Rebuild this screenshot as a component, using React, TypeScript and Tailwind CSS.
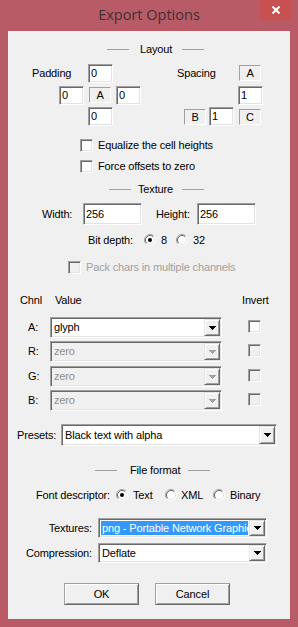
import React from "react";

const sunken =
  "border border-t-[#a0a0a0] border-l-[#a0a0a0] border-b-white border-r-white shadow-[inset_1px_1px_0_#696969,inset_-1px_-1px_0_#e3e3e3]";
const raised =
  "border border-t-[#e3e3e3] border-l-[#e3e3e3] border-b-[#696969] border-r-[#696969] shadow-[inset_1px_1px_0_#ffffff,inset_-1px_-1px_0_#a0a0a0]";
const btnRaised =
  "border border-t-[#a0a0a0] border-l-[#a0a0a0] border-b-[#696969] border-r-[#696969] shadow-[inset_1px_1px_0_#ffffff,inset_-1px_-1px_0_#a0a0a0]";
const thin = "border border-t-[#a0a0a0] border-l-[#a0a0a0] border-b-white border-r-white";

function Edit({ value, className = "" }: { value: string; className?: string }) {
  return <div className={`${sunken} bg-white flex items-center pl-[2px] ${className}`}>{value}</div>;
}

function LabelBox({ value, className = "" }: { value: string; className?: string }) {
  return <div className={`${thin} w-[22px] h-[16px] flex items-center justify-center ${className}`}>{value}</div>;
}

function Check({ disabled = false, className = "" }: { disabled?: boolean; className?: string }) {
  return <div className={`${sunken} w-[13px] h-[13px] shrink-0 ${disabled ? "bg-[#f0f0f0]" : "bg-white"} ${className}`} />;
}

function Radio({ checked = false }: { checked?: boolean }) {
  return (
    <svg width="12" height="12" viewBox="0 0 12 12" className="shrink-0">
      <circle cx="6" cy="6" r="5.5" fill="#fff" />
      <path d="M2.11 9.89A5.5 5.5 0 0 1 9.89 2.11" fill="none" stroke="#a0a0a0" />
      <path d="M9.89 2.11A5.5 5.5 0 0 1 2.11 9.89" fill="none" stroke="#ffffff" />
      <path d="M2.82 9.18A4.5 4.5 0 0 1 9.18 2.82" fill="none" stroke="#696969" />
      <path d="M9.18 2.82A4.5 4.5 0 0 1 2.82 9.18" fill="none" stroke="#e3e3e3" />
      {checked && <circle cx="6" cy="6" r="2" fill="#000" />}
    </svg>
  );
}

function Arrow({ color }: { color: string }) {
  return (
    <svg width="7" height="4" viewBox="0 0 7 4" shapeRendering="crispEdges">
      <path d="M0 0h7v1H0zM1 1h5v1H1zM2 2h3v1H2zM3 3h1v1H3z" fill={color} />
    </svg>
  );
}

function Combo({
  value,
  disabled = false,
  selected = false,
  className = "",
}: {
  value: string;
  disabled?: boolean;
  selected?: boolean;
  className?: string;
}) {
  return (
    <div className={`${sunken} ${disabled ? "bg-[#f0f0f0]" : "bg-white"} flex p-[1px] ${className}`}>
      <div className="flex-1 min-w-0 flex items-center overflow-hidden whitespace-nowrap">
        {selected ? (
          <div className="mx-[1px] my-[1px] self-stretch flex-1 min-w-0 bg-[#3399ff] text-white flex items-center pl-[1px] overflow-hidden whitespace-nowrap">
            {value}
          </div>
        ) : (
          <span className={`pl-[2px] ${disabled ? "text-[#8f8f8f]" : ""}`}>{value}</span>
        )}
      </div>
      <div className={`${raised} bg-[#f0f0f0] w-[16px] shrink-0 flex items-center justify-center`}>
        <Arrow color={disabled ? "#a0a0a0" : "#000000"} />
      </div>
    </div>
  );
}

export default function App() {
  return (
    <div className="w-[298px] h-[627px] bg-[#b95b66] flex flex-col font-['Liberation_Sans',Arial,sans-serif] text-[11px] tracking-[-0.15px] text-black select-none">
      {/* title bar */}
      <div className="h-[31px] shrink-0 grid grid-cols-[1fr_auto_1fr]">
        <div />
        <div className="self-center font-['Open_Sans',sans-serif] font-normal text-[14.5px] tracking-[0px] text-[#3f3033] mt-[-1px]">
          Export Options
        </div>
        <div className="flex justify-end items-start pr-[7px]">
          <div className="w-[31px] h-[20px] bg-[#c75050] flex items-center justify-center">
            <svg width="8" height="8" viewBox="0 0 8 8">
              <path d="M0.5 0.5L7.5 7.5M7.5 0.5L0.5 7.5" stroke="#ffffff" strokeWidth="2" />
            </svg>
          </div>
        </div>
      </div>

      {/* content */}
      <div className="mx-[8px] h-[588px] bg-[#f0f0f0] flex flex-col">
        {/* Layout header */}
        <div className="mt-[11px] h-[14px] flex items-center pl-[99px]">
          <div className="w-[22px] h-px bg-[#a0a0a0]" />
          <span className="ml-[11px]">Layout</span>
          <div className="ml-[10px] w-[22px] h-px bg-[#a0a0a0]" />
        </div>

        {/* padding / spacing */}
        <div className="mt-[8px] h-[62px] flex">
          <div className="ml-[24px] grid grid-cols-[27px_25px_32px_25px] grid-rows-[22px_21px_19px]">
            <span className="col-span-2 self-start mt-[1px]">Padding</span>
            <Edit value="0" className="col-start-3 ml-[4px] w-[25px] h-[19px]" />
            <div />
            <div />
            <Edit value="0" className="col-start-2 w-[25px] h-[19px]" />
            <LabelBox value="A" className="ml-[5px] mt-[1px]" />
            <Edit value="0" className="w-[25px] h-[19px]" />
            <Edit value="0" className="col-start-3 row-start-3 ml-[4px] w-[25px] h-[19px]" />
          </div>
          <div className="ml-[36px] grid grid-cols-[29px_3px_25px_4px_25px] grid-rows-[22px_21px_19px]">
            <span className="col-span-3 self-start mt-[1px]">Spacing</span>
            <LabelBox value="A" className="col-start-5 ml-[1px] mt-[1px]" />
            <Edit value="1" className="col-start-5 row-start-2 w-[25px] h-[19px]" />
            <LabelBox value="B" className="col-start-1 row-start-3 justify-self-end mt-[2px]" />
            <Edit value="1" className="col-start-3 row-start-3 w-[25px] h-[19px]" />
            <LabelBox value="C" className="col-start-5 row-start-3 ml-[1px] mt-[2px]" />
          </div>
        </div>

        {/* checkboxes */}
        <div className="mt-[9px] h-[21px] flex items-center pl-[72px]">
          <Check />
          <span className="ml-[5px]">Equalize the cell heights</span>
        </div>
        <div className="h-[21px] flex items-center pl-[72px]">
          <Check />
          <span className="ml-[5px]">Force offsets to zero</span>
        </div>

        {/* Texture header */}
        <div className="mt-[5px] h-[14px] flex items-center pl-[101px]">
          <div className="w-[22px] h-px bg-[#a0a0a0]" />
          <span className="ml-[7px]">Texture</span>
          <div className="ml-[9px] w-[22px] h-px bg-[#a0a0a0]" />
        </div>

        {/* width / height */}
        <div className="mt-[7px] h-[22px] flex items-center pl-[34px]">
          <span className="w-[41px]">Width:</span>
          <Edit value="256" className="w-[59px] h-[22px]" />
          <span className="ml-[14px] w-[41px]">Height:</span>
          <Edit value="256" className="w-[59px] h-[22px]" />
        </div>

        {/* bit depth */}
        <div className="mt-[8px] h-[14px] flex items-center pl-[80px]">
          <span className="w-[56px]">Bit depth:</span>
          <div className="w-[32px] flex items-center">
            <Radio checked />
            <span className="ml-[5px]">8</span>
          </div>
          <div className="flex items-center">
            <Radio />
            <span className="ml-[5px]">32</span>
          </div>
        </div>

        {/* pack chars */}
        <div className="mt-[13px] h-[14px] flex items-center pl-[60px]">
          <Check disabled />
          <span className="ml-[5px] text-[#a0a0a0]">Pack chars in multiple channels</span>
        </div>

        {/* channel table header */}
        <div className="mt-[19px] h-[14px] flex items-center pl-[12px]">
          <span className="w-[35px]">Chnl</span>
          <span className="w-[187px]">Value</span>
          <span>Invert</span>
        </div>

        {/* channel rows */}
        <div className="mt-[10px] h-[21px] flex items-center pl-[20px]">
          <span className="w-[22px]">A:</span>
          <Combo value="glyph" className="w-[172px] h-[21px]" />
          <Check className="ml-[26px] self-start mt-[3px]" />
        </div>
        <div className="mt-[3px] h-[21px] flex items-center pl-[20px]">
          <span className="w-[22px]">R:</span>
          <Combo value="zero" disabled className="w-[172px] h-[21px]" />
          <Check disabled className="ml-[26px] self-start mt-[3px]" />
        </div>
        <div className="mt-[4px] h-[21px] flex items-center pl-[20px]">
          <span className="w-[22px]">G:</span>
          <Combo value="zero" disabled className="w-[172px] h-[21px]" />
          <Check disabled className="ml-[26px] self-start mt-[3px]" />
        </div>
        <div className="mt-[3px] h-[21px] flex items-center pl-[20px]">
          <span className="w-[22px]">B:</span>
          <Combo value="zero" disabled className="w-[172px] h-[21px]" />
          <Check disabled className="ml-[26px] self-start mt-[3px]" />
        </div>

        {/* presets */}
        <div className="mt-[13px] h-[22px] flex items-center pl-[9px]">
          <span className="w-[44px]">Presets:</span>
          <Combo value="Black text with alpha" className="w-[216px] h-[22px]" />
        </div>

        {/* File format header */}
        <div className="mt-[17px] h-[14px] flex items-center pl-[87px]">
          <div className="w-[22px] h-px bg-[#a0a0a0]" />
          <span className="ml-[13px]">File format</span>
          <div className="ml-[8px] w-[22px] h-px bg-[#a0a0a0]" />
        </div>

        {/* font descriptor */}
        <div className="mt-[11px] h-[14px] flex items-center pl-[28px]">
          <span className="w-[80px]">Font descriptor:</span>
          <div className="w-[49px] flex items-center">
            <Radio checked />
            <span className="ml-[5px]">Text</span>
          </div>
          <div className="w-[48px] flex items-center">
            <Radio />
            <span className="ml-[4px]">XML</span>
          </div>
          <div className="flex items-center">
            <Radio />
            <span className="ml-[5px]">Binary</span>
          </div>
        </div>

        {/* textures / compression */}
        <div className="mt-[16px] h-[20px] flex items-center">
          <span className="w-[84px] text-right">Textures:</span>
          <Combo value="png - Portable Network Graphics" selected className="ml-[6px] w-[169px] h-[20px]" />
        </div>
        <div className="mt-[5px] h-[20px] flex items-center">
          <span className="w-[84px] text-right">Compression:</span>
          <Combo value="Deflate" className="ml-[6px] w-[169px] h-[20px]" />
        </div>

        {/* buttons */}
        <div className="mt-[20px] h-[22px] flex pl-[56px]">
          <div className={`${btnRaised} bg-[#f0f0f0] w-[75px] h-[22px] flex items-center justify-center`}>OK</div>
          <div className={`${btnRaised} bg-[#f0f0f0] ml-[16px] w-[75px] h-[22px] flex items-center justify-center`}>
            Cancel
          </div>
        </div>
      </div>
    </div>
  );
}
